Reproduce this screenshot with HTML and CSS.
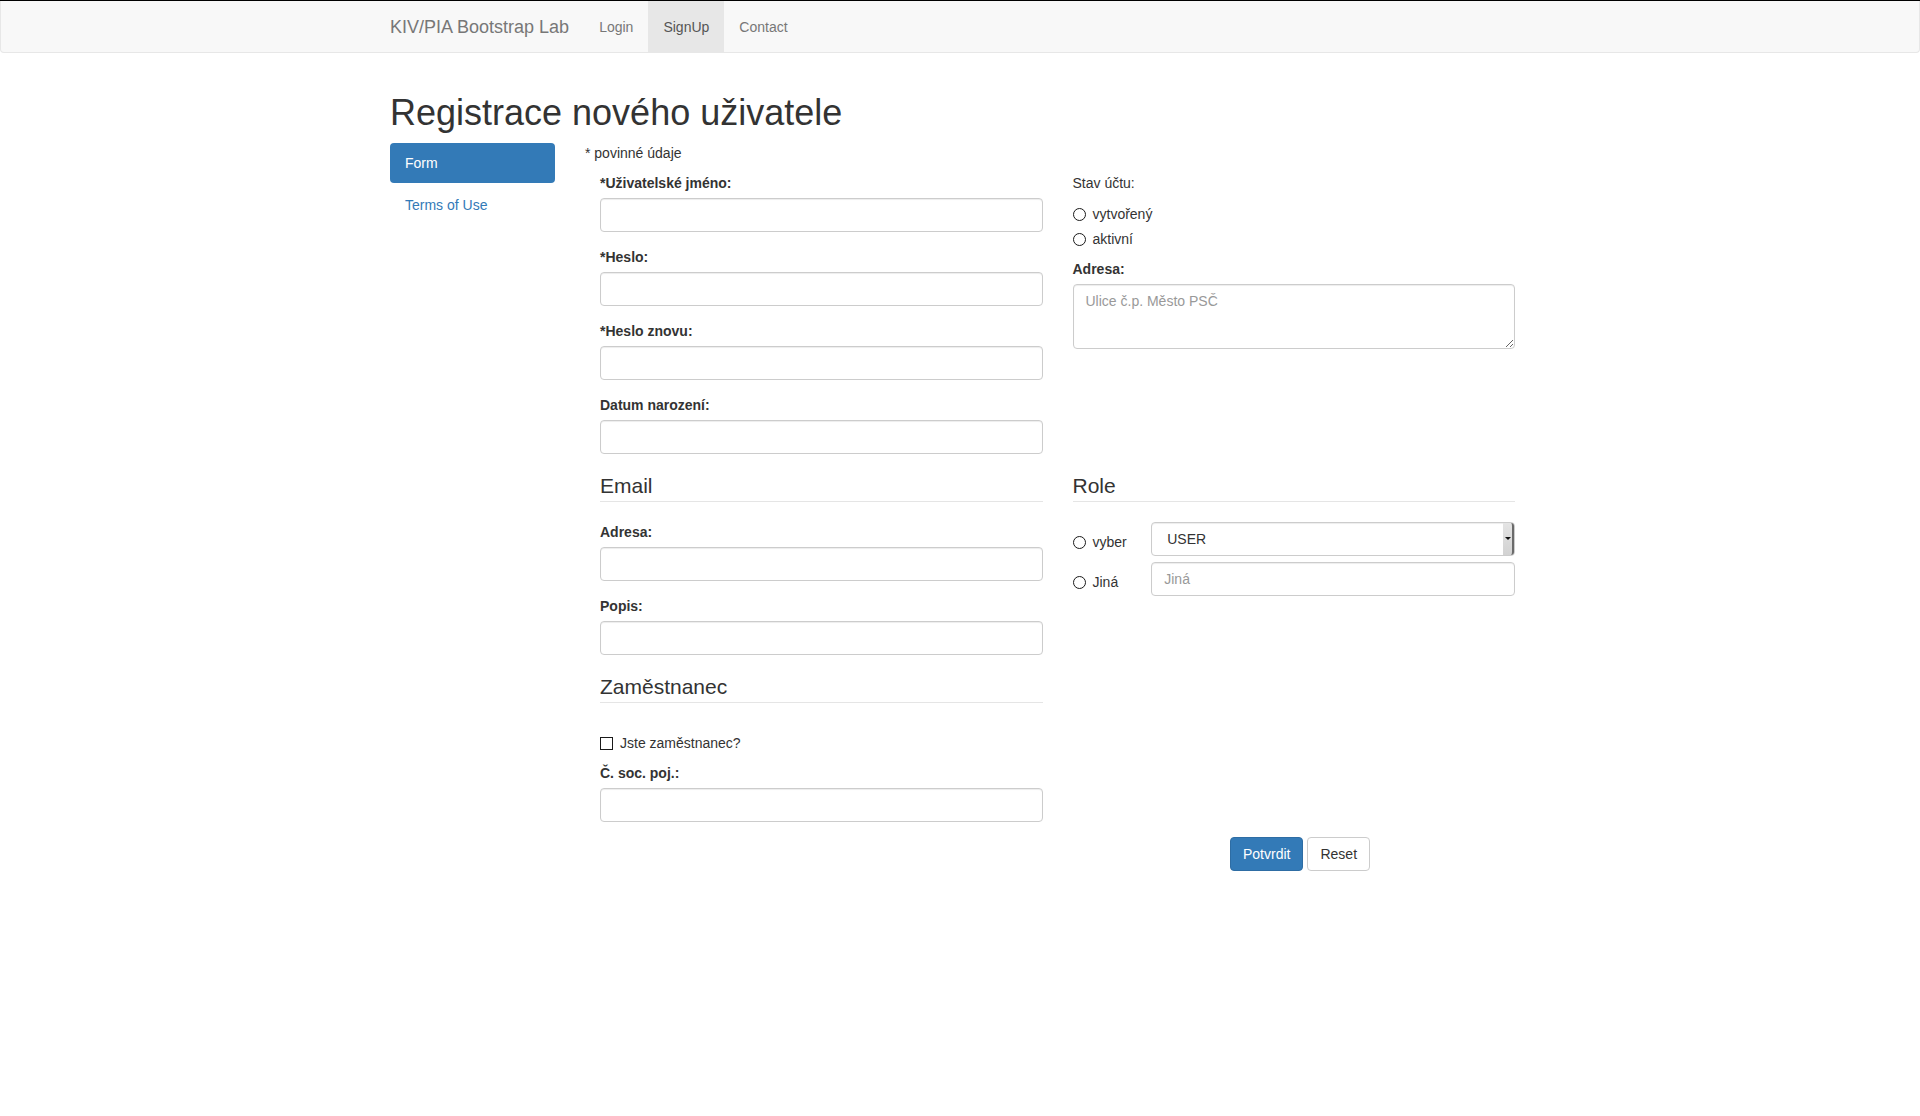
FILE: index.html
```html
<!DOCTYPE html>
<html lang="cs">
<head>
<meta charset="utf-8">
<title>Registrace nového uživatele</title>
<link rel="stylesheet" href="styles.css">
</head>
<body>
<div class="topline"></div>
<nav class="navbar">
  <div class="container nav-inner">
    <a class="brand" href="#">KIV/PIA Bootstrap Lab</a>
    <ul class="nav-links">
      <li><a href="#">Login</a></li>
      <li class="active"><a href="#">SignUp</a></li>
      <li><a href="#">Contact</a></li>
    </ul>
  </div>
</nav>

<main class="container main">
  <h1 class="page-title">Registrace nového uživatele</h1>
  <div class="layout">
    <aside class="sidebar">
      <ul class="pills">
        <li class="active"><a href="#">Form</a></li>
        <li><a href="#">Terms of Use</a></li>
      </ul>
    </aside>
    <section class="content">
      <p class="note">* povinné údaje</p>
      <form class="reg-form">
        <div class="grid">
          <div class="cell">
            <div class="form-group">
              <label class="lbl">*Uživatelské jméno:</label>
              <input class="form-control" type="text">
            </div>
            <div class="form-group">
              <label class="lbl">*Heslo:</label>
              <input class="form-control" type="password">
            </div>
            <div class="form-group">
              <label class="lbl">*Heslo znovu:</label>
              <input class="form-control" type="password">
            </div>
            <div class="form-group">
              <label class="lbl">Datum narození:</label>
              <input class="form-control" type="text">
            </div>
          </div>
          <div class="cell">
            <div class="stav">
              <span class="lbl lbl-normal">Stav účtu:</span>
              <label class="radio first"><input type="radio" name="stav">vytvořený</label>
              <label class="radio"><input type="radio" name="stav">aktivní</label>
            </div>
            <div class="form-group">
              <label class="lbl">Adresa:</label>
              <textarea class="form-control area" placeholder="Ulice č.p. Město PSČ"></textarea>
            </div>
          </div>

          <div class="cell">
            <div class="legend">Email</div>
            <div class="form-group">
              <label class="lbl">Adresa:</label>
              <input class="form-control" type="text">
            </div>
            <div class="form-group">
              <label class="lbl">Popis:</label>
              <input class="form-control" type="text">
            </div>
          </div>
          <div class="cell">
            <div class="legend">Role</div>
            <div class="role-grid">
              <label class="radio"><input type="radio" name="role">vyber</label>
              <div class="select-wrap">
                <select class="form-control sel">
                  <option>USER</option>
                </select>
                <span class="sel-arrow"></span>
              </div>
              <label class="radio"><input type="radio" name="role">Jiná</label>
              <input class="form-control" type="text" placeholder="Jiná">
            </div>
          </div>

          <div class="cell">
            <div class="legend">Zaměstnanec</div>
            <label class="checkbox"><input type="checkbox">Jste zaměstnanec?</label>
            <div class="form-group">
              <label class="lbl">Č. soc. poj.:</label>
              <input class="form-control" type="text">
            </div>
          </div>
          <div class="cell"></div>
        </div>
        <div class="actions">
          <button type="submit" class="btn btn-primary">Potvrdit</button>
          <button type="reset" class="btn btn-default">Reset</button>
        </div>
      </form>
    </section>
  </div>
</main>
</body>
</html>
```

FILE: styles.css
```css
* { box-sizing: border-box; }

html, body {
  margin: 0;
  padding: 0;
  background: #fff;
}

body {
  font-family: "Liberation Sans", Arial, Helvetica, sans-serif;
  font-size: 14px;
  line-height: 20px;
  color: #333;
}

a { text-decoration: none; }

.topline {
  height: 1px;
  background: #000;
}

.container {
  width: 1170px;
  margin: 0 auto;
  padding: 0 15px;
}

.main {
  display: flow-root;
}

/* navbar */
.navbar {
  background: #f8f8f8;
  border: 1px solid #e7e7e7;
  border-top: 0;
  border-radius: 0 0 4px 4px;
  min-height: 51px;
  margin-bottom: 20px;
}

.nav-inner {
  display: flex;
  align-items: stretch;
  height: 51px;
}

.brand {
  margin-left: -15px;
  padding: 16px 15px 15px;
  font-size: 18px;
  line-height: 20px;
  height: 51px;
  color: #777;
}

.nav-links {
  list-style: none;
  margin: 0;
  padding: 0;
  display: flex;
}

.nav-links a {
  display: block;
  padding: 16px 15px 15px;
  line-height: 20px;
  height: 51px;
  color: #777;
}

.nav-links .active a {
  background: #e7e7e7;
  color: #555;
}

/* heading */
.page-title {
  font-size: 36px;
  font-weight: normal;
  line-height: 39.6px;
  margin: 20px 0 10px;
  color: #333;
}

.layout {
  display: grid;
  grid-template-columns: 165px 945px;
  column-gap: 30px;
}

.pills {
  list-style: none;
  margin: 0;
  padding: 0;
  display: flex;
  flex-direction: column;
  gap: 2px;
}

.pills a {
  display: block;
  padding: 10px 15px;
  border-radius: 4px;
  color: #337ab7;
}

.pills .active a {
  background: #337ab7;
  color: #fff;
}

.note {
  margin: 0 0 10px;
}

.reg-form {
  padding: 0 15px;
}

.grid {
  display: grid;
  grid-template-columns: 1fr 1fr;
  column-gap: 30px;
}

.cell {
  min-width: 0;
}

.form-group {
  margin-bottom: 15px;
}

.lbl {
  display: block;
  font-weight: bold;
  margin-bottom: 5px;
}

.lbl-normal {
  font-weight: normal;
}

.form-control {
  display: block;
  width: 100%;
  height: 34px;
  padding: 6px 12px;
  font-family: inherit;
  font-size: 14px;
  line-height: 20px;
  color: #555;
  background: #fff;
  border: 1px solid #ccc;
  border-radius: 4px;
  box-shadow: inset 0 1px 1px rgba(0,0,0,.075);
  margin: 0;
}

.form-control::placeholder {
  color: #999;
}

.area {
  height: 65px;
  resize: vertical;
}

/* radios & checkbox */
.radio, .checkbox {
  position: relative;
  display: block;
  padding-left: 20px;
  font-weight: normal;
  line-height: 20px;
  cursor: pointer;
}

.radio input, .checkbox input {
  position: absolute;
  left: 0;
  top: 4px;
  margin: 0;
  width: 13px;
  height: 13px;
  -webkit-appearance: none;
  appearance: none;
  background: #fff;
  border: 1px solid #1a1a1a;
}

.radio input {
  border-radius: 50%;
}

.checkbox input {
  border-radius: 0;
}

.stav {
  margin-bottom: 10px;
}

.stav .lbl {
  margin-bottom: 0;
}

.stav .radio.first {
  margin-top: 11px;
}

.stav .radio + .radio {
  margin-top: 5px;
}

/* legends */
.legend {
  font-size: 21px;
  line-height: 20px;
  margin-top: 7px;
  padding-bottom: 5px;
  border-bottom: 1px solid #e5e5e5;
  margin-bottom: 20px;
  color: #333;
}

/* role */
.role-grid {
  display: grid;
  grid-template-columns: 48.75px 1fr;
  column-gap: 30px;
  row-gap: 6px;
}

.role-grid .radio {
  margin-top: 10px;
}

.select-wrap {
  position: relative;
}

.sel {
  -webkit-appearance: none;
  appearance: none;
  padding-left: 15px;
  color: #333;
}

.sel-arrow {
  position: absolute;
  top: 1px;
  bottom: 1px;
  right: 1px;
  width: 11px;
  background: linear-gradient(#e4e4e4, #d2d2d2);
  border-right: 2px solid #6a6a6a;
  border-radius: 0 3px 3px 0;
}

.sel-arrow::after {
  content: "";
  position: absolute;
  left: 2px;
  top: 14px;
  border-left: 3px solid transparent;
  border-right: 3px solid transparent;
  border-top: 3px solid #111;
}

/* checkbox */
.checkbox {
  margin: 30px 0 10px;
}

/* buttons */
.actions {
  display: flex;
  gap: 4px;
  margin-left: 630px;
}

.btn {
  font-family: inherit;
  font-size: 14px;
  line-height: 20px;
  padding: 6px 12px;
  border: 1px solid transparent;
  border-radius: 4px;
  cursor: pointer;
}

.btn-primary {
  background: #337ab7;
  border-color: #2e6da4;
  color: #fff;
}

.btn-default {
  background: #fff;
  border-color: #ccc;
  color: #333;
}
```
